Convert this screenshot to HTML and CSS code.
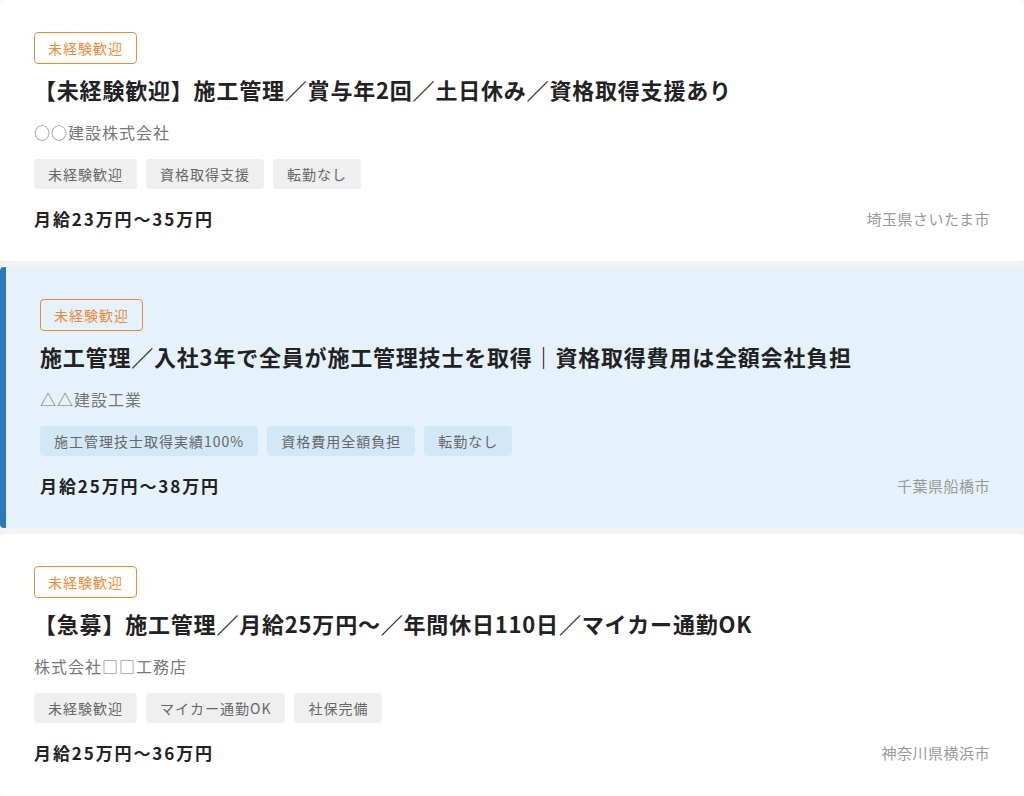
FILE: index.html
```html
<!DOCTYPE html>
<html lang="ja">
<head>
<meta charset="utf-8">
<title>求人一覧</title>
<link rel="stylesheet" href="styles.css">
</head>
<body>
<ul class="job-list">
  <li class="job-card">
    <span class="badge">未経験歓迎</span>
    <h2 class="job-title">【未経験歓迎】施工管理／賞与年2回／土日休み／資格取得支援あり</h2>
    <p class="company">○○建設株式会社</p>
    <ul class="tags">
      <li class="tag">未経験歓迎</li>
      <li class="tag">資格取得支援</li>
      <li class="tag">転勤なし</li>
    </ul>
    <div class="job-footer">
      <span class="salary">月給23万円〜35万円</span>
      <span class="location">埼玉県さいたま市</span>
    </div>
  </li>
  <li class="job-card featured">
    <span class="badge">未経験歓迎</span>
    <h2 class="job-title">施工管理／入社3年で全員が施工管理技士を取得｜資格取得費用は全額会社負担</h2>
    <p class="company">△△建設工業</p>
    <ul class="tags">
      <li class="tag">施工管理技士取得実績100%</li>
      <li class="tag">資格費用全額負担</li>
      <li class="tag">転勤なし</li>
    </ul>
    <div class="job-footer">
      <span class="salary">月給25万円〜38万円</span>
      <span class="location">千葉県船橋市</span>
    </div>
  </li>
  <li class="job-card">
    <span class="badge">未経験歓迎</span>
    <h2 class="job-title">【急募】施工管理／月給25万円〜／年間休日110日／マイカー通勤OK</h2>
    <p class="company">株式会社□□工務店</p>
    <ul class="tags">
      <li class="tag">未経験歓迎</li>
      <li class="tag">マイカー通勤OK</li>
      <li class="tag">社保完備</li>
    </ul>
    <div class="job-footer">
      <span class="salary">月給25万円〜36万円</span>
      <span class="location">神奈川県横浜市</span>
    </div>
  </li>
</ul>
</body>
</html>
```

FILE: styles.css
```css
* { box-sizing: border-box; }
html, body {
  margin: 0;
  padding: 0;
  background: #ffffff;
}
body {
  font-family: "Noto Sans CJK JP", "Noto Sans", sans-serif;
  color: #222;
}
.job-list {
  list-style: none;
  margin: 0;
  padding: 0;
  display: flex;
  flex-direction: column;
  gap: 6px;
  background: #f3f3f3;
}
.job-card {
  background: #ffffff;
  padding: 32px 34px 31px 34px;
  border-radius: 4px;
  display: flex;
  flex-direction: column;
  align-items: flex-start;
}
.job-card.featured {
  background: #e5f2fb;
  border-left: 6px solid #2a7bb8;
}
.badge {
  display: inline-block;
  border: 1px solid #ef8a34;
  color: #ef8a34;
  border-radius: 4px;
  font-size: 14px;
  letter-spacing: 1px;
  line-height: 22px;
  padding: 4px 13px;
  height: 32px;
}
.job-title {
  margin: 10px 0 0 0;
  font-size: 22px;
  line-height: 30px;
  font-weight: 700;
  letter-spacing: 0.8px;
  color: #222;
}
.company {
  margin: 16px 0 0 0;
  font-size: 16px;
  line-height: 24px;
  letter-spacing: 1px;
  color: #777;
}
.tags {
  list-style: none;
  margin: 15px 0 0 0;
  padding: 0;
  display: flex;
  gap: 9px;
}
.tag {
  background: #efefef;
  color: #666;
  border-radius: 4px;
  font-size: 14px;
  letter-spacing: 1px;
  line-height: 22px;
  padding: 4px 14px;
  height: 30px;
}
.featured .tag {
  background: #d3e8f6;
}
.job-footer {
  margin-top: 17px;
  width: 100%;
  display: flex;
  justify-content: space-between;
  align-items: center;
  height: 24px;
}
.salary {
  font-size: 17px;
  font-weight: 700;
  letter-spacing: 1.9px;
  color: #222;
}
.location {
  font-size: 15px;
  letter-spacing: 0.5px;
  color: #999;
}
```
